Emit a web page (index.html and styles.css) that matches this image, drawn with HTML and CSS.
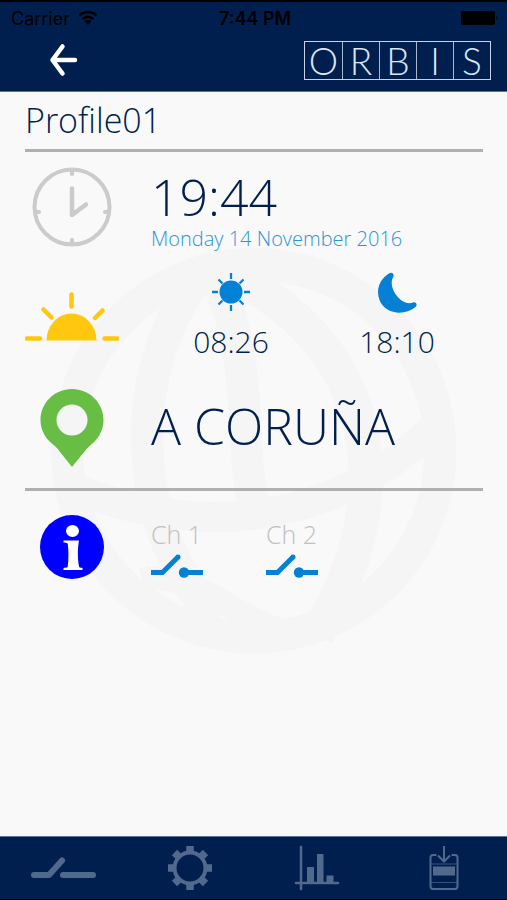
FILE: index.html
```html
<!DOCTYPE html>
<html lang="en">
<head>
    <meta charset="UTF-8">
    <meta name="viewport" content="width=device-width, initial-scale=1.0">
    <title>Profile01</title>
    <link rel="stylesheet" href="styles.css">
</head>
<body>
    <header class="header">
        <div class="status">
            <div class="carrier">
                <span>Carrier</span>
                <svg width="20" height="16" viewBox="0 0 20 16">
                    <path d="M1.5 5.5a12 12 0 0 1 17 0M4.8 9a7.400 7.400 0 0 1 10.400 0" fill="none" stroke="#000" stroke-width="2.600"/>
                    <path d="M10 15l-3.500-3.500a5 5 0 0 1 7 0z"/>
                </svg>
            </div>
            <span class="clock">7:44 PM</span>
            <div class="battery">
                <svg width="38" height="14" viewBox="0 0 38 14">
                    <rect width="34" height="14" rx="2"/>
                    <path d="M35.500 4.500q2 2.500 0 5z"/>
                </svg>
            </div>
        </div>
        <div class="nav">
            <button class="back" aria-label="Back">
                <svg width="30" height="34" viewBox="0 0 30 34">
                    <path d="M14.500 3.500L4.500 17l10 13.500M4.500 17H27" fill="none" stroke="#fff" stroke-width="4.500" stroke-linecap="round" stroke-linejoin="round"/>
                </svg>
            </button>
            <div class="logo">
                <span>O</span><span>R</span><span>B</span><span>I</span><span>S</span>
            </div>
        </div>
    </header>

    <main class="main">
        <svg class="globe" viewBox="0 0 404 404" fill="none" stroke="#f5f5f5">
            <circle cx="202" cy="202" r="186" stroke-width="32"/>
            <path d="M150 25C80 110 70 270 165 370" stroke-width="32"/>
            <path d="M165 30C205 120 185 200 205 270" stroke-width="32"/>
            <path d="M170 25C290 70 370 210 265 385" stroke-width="34"/>
            <path d="M12 235C140 290 280 280 385 175" stroke-width="30"/>
            <path d="M90 330C150 320 190 380 250 385" stroke-width="24"/>
        </svg>

        <div class="content">
            <h1 class="title">Profile01</h1>

            <section class="panel">
                <div class="row row-time">
                    <svg width="80" height="80" viewBox="0 0 80 80" fill="none" stroke="#cbcbcb">
                        <circle cx="40" cy="40" r="37.500" stroke-width="4"/>
                        <path d="M40 21.500V48L54 37.500" stroke-width="4.500" stroke-linecap="round" stroke-linejoin="round"/>
                        <path d="M40 3v4M40 73v4M3 45h4M73 45h4" stroke-width="4" stroke-linecap="round"/>
                    </svg>
                    <div>
                        <div class="time">19:44</div>
                        <div class="date">Monday 14 November 2016</div>
                    </div>
                </div>

                <div class="row row-sun">
                    <svg width="94" height="50" viewBox="0 0 94 50">
                        <path d="M21.500 48.500a25 27 0 0 1 50 0z" fill="#ffc70d"/>
                        <path d="M2 46.500h13M79.500 46.500h13M46.500 2.500v12M18.500 17.500l8 8M77.500 18.500L70 26" fill="none" stroke="#ffc70d" stroke-width="4.500" stroke-linecap="round"/>
                    </svg>
                    <div class="hours">
                        <div class="hour">
                            <svg width="42" height="42" viewBox="0 0 42 42">
                                <circle cx="21" cy="21" r="11.500" fill="#0480d4"/>
                                <path d="M21 2v6M21 34v6M2 21h6M34 21h6M8.500 8.500l4 4M33.500 8.500l-4 4M8.500 33.500l4-4M33.500 33.500l-4-4" stroke="#0480d4" stroke-width="2.300"/>
                            </svg>
                            <span>08:26</span>
                        </div>
                        <div class="hour">
                            <svg width="42" height="42" viewBox="0 0 42 42">
                                <path d="M13 2.500C16 .5 19 3.500 17 6.500C11.500 16 25 36 37 31.500C40 30.500 42 34 39.500 36C28 45.500 9 43 3.500 29C-.5 18.500 4 8 13 2.500z" fill="#0480d4"/>
                            </svg>
                            <span>18:10</span>
                        </div>
                    </div>
                </div>

                <div class="row row-place">
                    <svg width="64" height="80" viewBox="0 0 64 80">
                        <path fill-rule="evenodd" fill="#68bd45" d="M32 1C49.500 1 63.500 15 63.500 32C63.500 43 58 51.500 49 58.500C46.500 61 40 69 32 79C24 69 18 61 15.500 58.500C6 51.500.5 43 .5 32C.5 15 14.500 1 32 1zM32 16.500a15.500 15.500 0 1 0 0 31a15.500 15.500 0 1 0 0-31z"/>
                    </svg>
                    <div class="place">A CORUÑA</div>
                </div>
            </section>

            <section class="row row-info">
                <svg width="64" height="64" viewBox="0 0 64 64">
                    <circle cx="32" cy="32" r="32" fill="#00f"/>
                    <g fill="#fff">
                        <ellipse cx="32.500" cy="16" rx="6.500" ry="6"/>
                        <path d="M23.500 25.500h15.500c-1.500 8-1.500 19 .2 26.500c1 .8 2 .8 3.300 1v2h-19v-2c1.500-.2 3-.3 4.200-1c1-8 1-16.500 0-23.500c-1.200-.8-2.700-1-4.200-1z"/>
                    </g>
                </svg>
                <div class="channels">
                    <div class="channel">
                        <span>Ch 1</span>
                        <svg width="52" height="26" viewBox="0 0 52 26">
                            <path d="M0 19.500h11.500L27.500 3.500" fill="none" stroke="#0480d4" stroke-width="5"/>
                            <circle cx="27" cy="4" r="2.500" fill="#0480d4"/>
                            <circle cx="33" cy="19.500" r="5.200" fill="#0480d4"/>
                            <path d="M33 19.500h19" stroke="#0480d4" stroke-width="5"/>
                        </svg>
                    </div>
                    <div class="channel">
                        <span>Ch 2</span>
                        <svg width="52" height="26" viewBox="0 0 52 26">
                            <path d="M0 19.500h11.500L27.500 3.500" fill="none" stroke="#0480d4" stroke-width="5"/>
                            <circle cx="27" cy="4" r="2.500" fill="#0480d4"/>
                            <circle cx="33" cy="19.500" r="5.200" fill="#0480d4"/>
                            <path d="M33 19.500h19" stroke="#0480d4" stroke-width="5"/>
                        </svg>
                    </div>
                </div>
            </section>
        </div>
    </main>

    <nav class="tabs">
        <button aria-label="Channels">
            <svg width="66" height="46" viewBox="0 0 66 46" fill="none" stroke="#50698c" stroke-width="6" stroke-linecap="round" stroke-linejoin="round">
                <path d="M4 30h15L32 15.500M33 30h30"/>
            </svg>
        </button>
        <button aria-label="Settings">
            <svg width="46" height="46" viewBox="0 0 46 46" fill="none" stroke="#50698c">
                <circle cx="23" cy="23" r="15.500" stroke-width="4"/>
                <path d="M23 1v6M23 39v6M1 23h6M39 23h6M7.500 7.500l4.200 4.200M34.300 34.300l4.200 4.200M38.500 7.500l-4.200 4.200M11.700 34.300l-4.200 4.200" stroke-width="7.500"/>
            </svg>
        </button>
        <button aria-label="Statistics">
            <svg width="46" height="46" viewBox="0 0 46 46">
                <path d="M7 2v42M2 38h42" stroke="#50698c" stroke-width="2.500" stroke-linecap="round"/>
                <path d="M13 22h7v16h-7zM23 9h6.500v29H23zM32.500 30.500h7V38h-7z" fill="#50698c"/>
            </svg>
        </button>
        <button aria-label="Download">
            <svg width="46" height="46" viewBox="0 0 46 46" fill="none" stroke="#50698c" stroke-width="2">
                <path d="M15.500 10H12q-2.500 0-2.500 2.500V41q0 3 2.500 3h22q2.500 0 2.500-3V12.500Q36.500 10 34 10h-3.500M23 1v15M17 10.500l6 6 6-6"/>
                <path d="M10 19h26M10 37.500h26" stroke-width="1" opacity=".7"/>
                <path d="M12 21.500h22v9H12z" fill="#50698c" stroke="none"/>
            </svg>
        </button>
    </nav>
</body>
</html>
```
FILE: styles.css
```css
* {
    box-sizing: border-box;
}

body {
    display: flex;
    flex-direction: column;
    min-height: 100vh;
    margin: 0;
    font-family: "Open Sans", "Noto Sans", sans-serif;
    font-weight: 300;
    background-color: #f9f9f9;
    color: #001f4e;
}

svg {
    display: block;
}

button {
    padding: 0;
    border: none;
    background: none;
    cursor: pointer;
}

.header {
    border-top: 2px solid #000;
    border-bottom: 1px solid #5b7291;
    background-color: #001f4e;
}

.status {
    display: grid;
    grid-template-columns: 1fr auto 1fr;
    align-items: center;
    height: 32px;
    padding: 0 8px 0 11px;
    font-family: Inter, sans-serif;
    font-size: 18px;
    font-weight: 400;
    color: #000;
}

.carrier {
    display: flex;
    align-items: center;
    gap: 8px;
}

.clock {
    font-weight: 600;
}

.battery {
    justify-self: end;
}

.nav {
    display: flex;
    align-items: center;
    justify-content: space-between;
    height: 57px;
    padding: 0 16px 5px 48px;
}

.logo {
    display: flex;
    border: 1px solid #c8d3e3;
    font-family: Lato, sans-serif;
    font-size: 37px;
    line-height: 37px;
    text-align: center;
    color: #dce6f5;
}

.logo span {
    width: 37px;
    height: 37px;
}

.logo span + span {
    border-left: 1px solid #a9b8cd;
}

.main {
    flex: 1;
    display: grid;
}

/* globe and content share one cell, the globe stays behind */
.globe,
.content {
    grid-area: 1 / 1;
}

.globe {
    width: 80%;
    margin-top: 156px;
    justify-self: center;
}

.content {
    padding: 0 24px 0 25px;
}

.title {
    margin: 0;
    height: 57px;
    font-size: 34px;
    font-weight: 300;
    line-height: 56px;
}

.panel {
    border-top: 3px solid #b0b0b0;
    border-bottom: 3px solid #b0b0b0;
}

.row {
    display: grid;
    grid-template-columns: 94px 1fr;
    column-gap: 32px;
}

.row > svg {
    justify-self: center;
}

.row-time {
    padding-top: 15px;
}

.time,
.place {
    font-size: 50px;
    line-height: 60px;
}

.place {
    padding-bottom: 4px;
}

.date {
    font-size: 20px;
    line-height: 24px;
    color: #2b95d8;
}

.row-sun {
    padding-top: 20px;
}

.row-sun > svg {
    margin-top: 21px;
}

.hours {
    display: grid;
    grid-template-columns: 1fr 1fr;
    gap: 6px;
    padding-right: 6px;
}

.hour {
    display: flex;
    flex-direction: column;
    align-items: center;
    gap: 9px;
    font-size: 30px;
    line-height: 40px;
}

.row-place {
    align-items: center;
    padding: 26px 0 20px;
}

.row-info {
    align-items: center;
    padding-top: 24px;
}

.channels {
    display: flex;
    gap: 63px;
}

.channel {
    font-size: 25px;
    line-height: 38px;
    color: #c0c0c0;
}

.tabs {
    display: grid;
    grid-template-columns: repeat(4, 1fr);
    height: 64px;
    border-top: 1px solid #5b7291;
    border-bottom: 1px solid #000;
    background-color: #001f4e;
}

.tabs button {
    display: flex;
    align-items: center;
    justify-content: center;
}
```
